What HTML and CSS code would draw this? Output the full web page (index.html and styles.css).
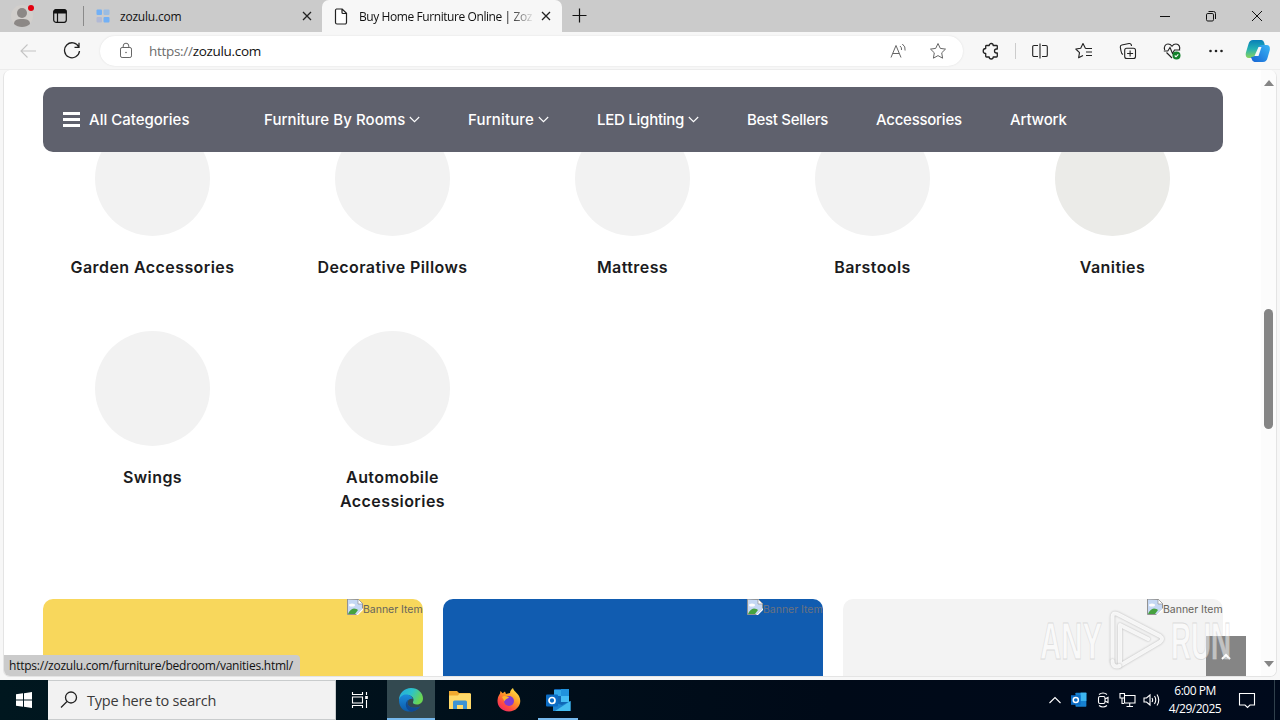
FILE: index.html
```
<!DOCTYPE html>
<html lang="en">
<head>
<meta charset="UTF-8">
<meta name="viewport" content="width=device-width, initial-scale=1">
<title>Buy Home Furniture Online | Zozulu</title>
<link rel="stylesheet" href="styles.css">
</head>
<body>

<div class="tabbar">
  <div class="profile">
    <svg width="24" height="26" viewBox="0 0 24 26"><circle cx="11" cy="14" r="11" fill="#d2cfcc"/><circle cx="11" cy="11" r="5" fill="#8c8886"/><path d="M3 22c0-4 3-5 8-5s8 1 8 5c-2 2-5 3-8 3s-6-1-8-3z" fill="#8c8886"/><circle cx="20" cy="6" r="3" fill="#e3000f"/></svg>
  </div>
  <div class="tab-actions">
    <svg width="16" height="16" viewBox="0 0 16 16"><rect x="1.700" y="1.700" width="12.600" height="12.600" rx="2.200" fill="none" stroke="#111" stroke-width="1.200"/><path d="M1.500 5.500V3.500a2 2 0 0 1 2-2h9a2 2 0 0 1 2 2v2z" fill="#111"/><path d="M5.500 5v9" stroke="#111" stroke-width="1.200"/></svg>
  </div>
  <div class="tab">
    <svg width="14" height="14" viewBox="0 0 14 14"><g fill="#72b0f5"><rect x="7.500" y=".5" width="6" height="5.500" rx="1" opacity=".55"/><rect x=".5" y=".5" width="5.500" height="5.500" rx="1"/><rect x="7.500" y="8" width="6" height="5.500" rx="1"/></g><rect x=".5" y="8" width="5.500" height="5.500" rx="1" fill="#b1b9d5"/></svg>
    <span class="tab-title">zozulu.com</span>
    <svg class="tab-close" width="10" height="10" viewBox="0 0 10 10"><path d="M1 1l8 8M9 1L1 9"/></svg>
  </div>
  <div class="tab active">
    <svg width="14" height="17" viewBox="0 0 14 17"><path d="M2.500 1h5.700L12.500 5.300v9.200a1.500 1.500 0 0 1-1.500 1.500H3A1.500 1.500 0 0 1 1.500 14.500V2.300A1.300 1.300 0 0 1 2.500 1zM8 1v3.500a1 1 0 0 0 1 1h3.500" fill="#fff" stroke="#222" stroke-width="1.200"/></svg>
    <span class="tab-title fade">Buy Home Furniture Online | Zoz</span>
    <svg class="tab-close" width="10" height="10" viewBox="0 0 10 10"><path d="M1 1l8 8M9 1L1 9"/></svg>
  </div>
  <div class="new-tab">
    <svg width="15" height="15" viewBox="0 0 15 15"><path d="M7.500 .5v14M.5 7.500h14" stroke="#111" stroke-width="1.200"/></svg>
  </div>
  <div class="window-buttons">
    <svg width="12" height="12" viewBox="0 0 12 12"><path d="M1 6.500h10"/></svg>
    <svg width="12" height="12" viewBox="0 0 12 12"><rect x="1.500" y="3.500" width="7" height="7.500" rx="1.300"/><path d="M3.500 1.500H8.500A2 2 0 0 1 10.500 3.500V9"/></svg>
    <svg width="12" height="12" viewBox="0 0 12 12"><path d="M1 1l10 10M11 1L1 11"/></svg>
  </div>
</div>

<div class="toolbar">
  <div class="tool muted"><svg width="18" height="16" viewBox="0 0 18 16"><path d="M17 8H2M8.500 1.500L2 8l6.500 6.500"/></svg></div>
  <div class="tool"><svg width="18" height="18" viewBox="0 0 18 18"><path d="M15.800 5A7.500 7.500 0 1 0 16.500 9M16 .8V5.300H11.500" stroke-width="1.300"/></svg></div>
  <div class="address">
    <svg width="14" height="17" viewBox="0 0 14 17"><rect x="1.500" y="5.500" width="11" height="10" rx="1.600"/><path d="M4.200 5.500V4a2.800 2.800 0 0 1 5.600 0v1.500"/><circle cx="7" cy="10.500" r=".8" fill="#666" stroke="none"/></svg>
    <span class="url"><i>https://</i>zozulu.com</span>
    <svg class="read" width="17" height="16" viewBox="0 0 17 16"><path d="M1 14.500L6 2.500l5 12M2.800 10.500h6.400M10 3q2 1.500 1.500 4M12.300 1q3.500 2.500 2.800 6.500"/></svg>
    <svg width="18" height="18" viewBox="0 0 18 18"><path d="M9 1.500l2.300 4.900 5.200.7-3.800 3.700.9 5.400L9 13.600l-4.600 2.600.9-5.400L1.500 7.100l5.200-.7z" stroke-linejoin="round"/></svg>
  </div>
  <div class="tool"><svg width="18" height="18" viewBox="0 0 18 18"><path d="M4.500 3.500h2.700a2 2 0 0 1 4 0h3.300q.8 0 .8.800V7H14.500a2 2 0 0 0 0 4h.8v3.200q0 .8-.8.800h-3.300a2 2 0 0 1-4 0H4.500q-.8 0-.8-.8V11.500a2.300 2.300 0 0 1 0-5V4.300q0-.8.800-.8z" stroke-linejoin="round" stroke-width="1.300"/></svg></div>
  <div class="divider"></div>
  <div class="tool"><svg width="18" height="18" viewBox="0 0 18 18"><path d="M7 3.500H3A1.300 1.300 0 0 0 1.700 4.800v8.400A1.300 1.300 0 0 0 3 14.500h4M11 3.500h4a1.300 1.300 0 0 1 1.300 1.300v8.400a1.300 1.300 0 0 1-1.300 1.300h-4M9 1.500v15"/></svg></div>
  <div class="tool"><svg width="18" height="18" viewBox="0 0 18 18"><path d="M10.500 6.500L8 1.500 5.700 6.300.8 7l3.700 3.600-.9 5.200L8 13.400M10.500 6.500h6.500M11 10h6M11 13.500h6" stroke-linejoin="round"/></svg></div>
  <div class="tool"><svg width="18" height="18" viewBox="0 0 18 18"><rect x="5.700" y="6.200" width="10.800" height="10.300" rx="2"/><path d="M11.100 8.500v6M8.100 11.500h6M4 12.500C2.500 12 2.300 11 2 9L1.300 5.200A2 2 0 0 1 2.800 3L10 1.500a2 2 0 0 1 2.300 1.300L12.500 4" /></svg></div>
  <div class="tool"><svg width="18" height="18" viewBox="0 0 18 18"><path d="M1.700 8C.5 4.500 2.500 2 5 2c2 0 3.200 1 4 2.200C9.800 3 11 2 13 2c3 0 4.500 3 3.300 6M.8 9h4L7 5.500l2.500 6L11.500 8h5.700M3.500 10.500L9 16"/><circle cx="13.500" cy="13.500" r="4" fill="#13812b" stroke="none"/><path d="M11.700 13.500l1.300 1.300 2.300-2.500" stroke="#fff"/></svg></div>
  <div class="tool"><svg width="18" height="18" viewBox="0 0 18 18"><g fill="#222" stroke="none"><circle cx="3.500" cy="9" r="1.300"/><circle cx="9" cy="9" r="1.300"/><circle cx="14.500" cy="9" r="1.300"/></g></svg></div>
  <div class="copilot">
    <svg width="26" height="24" viewBox="0 0 26 24">
      <defs>
        <linearGradient id="cpA" x1="0" y1="0" x2="0" y2="1"><stop offset="0" stop-color="#087fb8"/><stop offset=".5" stop-color="#24b1b4"/><stop offset="1" stop-color="#8bd45b"/></linearGradient>
        <linearGradient id="cpB" x1="1" y1="0" x2="0" y2="1"><stop offset="0" stop-color="#39b6f5"/><stop offset="1" stop-color="#1663d3"/></linearGradient>
      </defs>
      <path d="M8 1h8.500q2 0 2.800 3l.7 3h-3q-3 0-4 3l-2 6q-1 3-4 3H4q-4 0-3.200-5L3.500 5Q4.500 1 8 1z" fill="url(#cpA)"/>
      <path d="M18 23H9.500q-2 0-2.800-3L6 18q4 0 5-3l2-6q1-3 4-3h4.500q4 0 3.300 5l-2.300 8q-1 4-4.500 4z" fill="url(#cpB)"/>
      <path d="M13.500 8h3l-3 9h-4z" fill="#f7f7f7"/>
    </svg>
  </div>
</div>

<div class="viewport">
  <nav class="site-nav">
    <div class="all-categories">
      <span class="burger"></span>
      <span>All Categories</span>
    </div>
    <ul class="menu">
      <li class="m-rooms">Furniture By Rooms <svg width="11" height="7" viewBox="0 0 11 7"><path d="M.8 1l4.700 4.700L10.200 1"/></svg></li>
      <li class="m-furniture">Furniture <svg width="11" height="7" viewBox="0 0 11 7"><path d="M.8 1l4.700 4.700L10.200 1"/></svg></li>
      <li class="m-led">LED Lighting <svg width="11" height="7" viewBox="0 0 11 7"><path d="M.8 1l4.700 4.700L10.200 1"/></svg></li>
      <li class="m-best">Best Sellers</li>
      <li class="m-acc">Accessories</li>
      <li class="m-art">Artwork</li>
    </ul>
  </nav>

  <div class="categories">
    <div class="category"><div class="circle"></div><h3>Garden Accessories</h3></div>
    <div class="category"><div class="circle"></div><h3>Decorative Pillows</h3></div>
    <div class="category"><div class="circle"></div><h3>Mattress</h3></div>
    <div class="category"><div class="circle"></div><h3>Barstools</h3></div>
    <div class="category hover"><div class="circle"></div><h3>Vanities</h3></div>
    <div class="category"><div class="circle"></div><h3>Swings</h3></div>
    <div class="category"><div class="circle"></div><h3>Automobile<br>Accessiories</h3></div>
  </div>

  <div class="banners">
    <div class="banner yellow">
      <svg width="16" height="16" viewBox="0 0 16 16"><path d="M.5 0v15.500H10L15.500 10V4.500L11 .5z" fill="#c5d8f4" stroke="#929292"/><path d="M11 0v5h5z" fill="#fff" stroke="#929292" stroke-width=".7"/><ellipse cx="5" cy="6" rx="3" ry="1.600" fill="#fff"/><path d="M1 15q2-5 6-5.500 3 0 4 1.500L8 15z" fill="#46a23f"/><path d="M9 16l7-7v2l-5 5z" fill="#fff"/></svg><span>Banner Item</span>
    </div>
    <div class="banner blue">
      <svg width="16" height="16" viewBox="0 0 16 16"><path d="M.5 0v15.500H10L15.500 10V4.500L11 .5z" fill="#c5d8f4" stroke="#929292"/><path d="M11 0v5h5z" fill="#fff" stroke="#929292" stroke-width=".7"/><ellipse cx="5" cy="6" rx="3" ry="1.600" fill="#fff"/><path d="M1 15q2-5 6-5.500 3 0 4 1.500L8 15z" fill="#46a23f"/><path d="M9 16l7-7v2l-5 5z" fill="#fff"/></svg><span>Banner Item</span>
    </div>
    <div class="banner grey">
      <svg width="16" height="16" viewBox="0 0 16 16"><path d="M.5 0v15.500H10L15.500 10V4.500L11 .5z" fill="#c5d8f4" stroke="#929292"/><path d="M11 0v5h5z" fill="#fff" stroke="#929292" stroke-width=".7"/><ellipse cx="5" cy="6" rx="3" ry="1.600" fill="#fff"/><path d="M1 15q2-5 6-5.500 3 0 4 1.500L8 15z" fill="#46a23f"/><path d="M9 16l7-7v2l-5 5z" fill="#fff"/></svg><span>Banner Item</span>
    </div>
  </div>

  <div class="to-top"><svg width="10" height="7" viewBox="0 0 10 7"><path d="M1 6l4-4 4 4" fill="none" stroke="#fff" stroke-width="2"/></svg></div>

  <div class="scrollbar">
    <svg width="10" height="6" viewBox="0 0 10 6"><path d="M0 6L5 0l5 6z" fill="#858585"/></svg>
    <div class="thumb"></div>
    <svg width="10" height="6" viewBox="0 0 10 6"><path d="M0 0l5 6 5-6z" fill="#858585"/></svg>
  </div>

  <div class="status">https://zozulu.com/furniture/bedroom/vanities.html/</div>
</div>

<svg class="watermark" width="200" height="70" viewBox="0 0 200 70">
  <text x="3" y="54" textLength="62" lengthAdjust="spacingAndGlyphs">ANY</text>
  <text x="134" y="54" textLength="60" lengthAdjust="spacingAndGlyphs">RUN</text>
  <path class="play" d="M75.500 56V12q0-5 5-3L123 31q4 3 0 6L83 60.500V20l28 14"/>
  <path class="play" d="M75.500 56q0 7 7 5"/>
</svg>

<div class="taskbar">
  <div class="start"><svg width="16" height="16" viewBox="0 0 16 16"><path d="M0 2.300L7 1.300V7.500H0zM8 1.200L16 0v7.500H8zM0 8.500h7v6.200l-7-1zM8 8.500h8V16l-8-1.200z" fill="#fff"/></svg></div>
  <div class="search">
    <svg width="18" height="18" viewBox="0 0 18 18"><circle cx="11" cy="6.500" r="5.500"/><path d="M7 10.500L1 16.500"/></svg>
    <span>Type here to search</span>
  </div>
  <div class="app taskview"><svg width="18" height="16" viewBox="0 0 18 16"><path d="M1.500 0v2.500h10V0M1.500 5h10v6h-10zM1.500 16v-2.500h10V16M15.500 0v3M15.500 8v8" fill="none" stroke="#fff" stroke-width="1.100"/><rect x="14.200" y="4" width="2.600" height="3" fill="#fff"/></svg></div>
  <div class="app current running">
    <svg width="24" height="24" viewBox="0 0 24 24">
      <defs>
        <linearGradient id="edA" x1="0" y1="0" x2="1" y2=".4"><stop offset="0" stop-color="#24a8df"/><stop offset=".55" stop-color="#2dc3c9"/><stop offset="1" stop-color="#6ad552"/></linearGradient>
        <linearGradient id="edB" x1="0" y1="0" x2="0" y2="1"><stop offset="0" stop-color="#1b8bdc"/><stop offset="1" stop-color="#0c5aa8"/></linearGradient>
      </defs>
      <path d="M0 12C0 5 5.500 0 12 0c7 0 12 5 12 10.500 0 3.500-2.500 6-6 6-3 0-4.500-1.200-4-2.500 1-1.500 1-5-3-6.500C7 6 2 8 0 12z" fill="url(#edA)"/>
      <path d="M0 12c1-4.500 6-6.500 10-5 2 .8 3.500 2.500 3.800 4-1.500-1-4.800 0-5.300 3-.6 4.500 5 7.500 12.500 4.500C17 25.500 0 27 0 12z" fill="url(#edB)"/>
      <path d="M8.500 14c-.6 4.500 5 7.500 12.500 4.500-2.500 3.500-5.500 5-8.500 5.300C7 22 4.500 15.500 9.500 11.500 9 12.300 8.600 13 8.500 14z" fill="#104a94"/>
    </svg>
  </div>
  <div class="app"><svg width="22" height="20" viewBox="0 0 22 20"><path d="M0 1h8l2 2h11v16H0z" fill="#f0a92f"/><path d="M0 5.500h9l1.500-2H22V19H0z" fill="#ffd969"/><path d="M4 19v-7q0-1.500 1.500-1.500h11q1.500 0 1.500 1.500v7h-4v-4H8v4z" fill="#3d93d3"/></svg></div>
  <div class="app">
    <svg width="24" height="24" viewBox="0 0 24 24">
      <defs><linearGradient id="ffA" x1=".9" y1="0" x2=".2" y2="1"><stop offset="0" stop-color="#fff04d"/><stop offset=".45" stop-color="#ff9826"/><stop offset=".75" stop-color="#ff4a42"/><stop offset="1" stop-color="#ed2765"/></linearGradient></defs>
      <path d="M16 0c.5 3 4 4.500 6 8 4 8-2 15.500-10 15.500S-.5 17.500.7 11c.3-2.500 1.300-4 2.300-5.500L3.500 3l2.200 2.200L8 3.500 9 6l4-1c0-2 1.300-4 3-5z" fill="url(#ffA)"/>
      <circle cx="12" cy="13" r="5" fill="#813bd2"/>
      <path d="M5 9c3-2 5 0 7 .2-1.500 2-4 1.500-4.200 4.300C7 12 6 11 5 9z" fill="#ffb52e"/>
    </svg>
  </div>
  <div class="app running small">
    <svg width="25" height="23" viewBox="0 0 25 23"><rect x="8" y="0" width="15" height="20" rx="1" fill="#1066b5"/><path d="M8 1h7v6H8z" fill="#32a8e8"/><path d="M15 0h8v7h-8z" fill="#2192dd"/><path d="M15 7h8v6h-8z" fill="#45bcf4"/><path d="M7 13l9 3 8.500-4v10H7z" fill="#1c83d0"/><path d="M24.500 12L9 22h15.500z" fill="#46bdf0"/><rect x="0" y="5.500" width="12" height="12" rx="1" fill="#0b6cc4"/><circle cx="6" cy="11.500" r="3" fill="none" stroke="#fff" stroke-width="1.700"/></svg>
  </div>
  <div class="tray">
    <svg width="14" height="14" viewBox="0 0 14 14"><path d="M1.500 10L7 4.500l5.500 5.500"/></svg>
    <svg width="16" height="16" viewBox="0 0 25 23"><g stroke="none"><rect x="7" y="0" width="17" height="22" rx="1" fill="#1680cf"/><path d="M15 0h9v13h-9z" fill="#3db5ef"/><rect x="0" y="4" width="15" height="15" fill="#0b6cc4"/></g><circle cx="7.500" cy="11.500" r="4" stroke-width="2.300"/></svg>
    <svg width="16" height="16" viewBox="0 0 16 16"><rect x="3.500" y="4.500" width="6.500" height="7" rx="1.500"/><path d="M10 7l3-1.500v5L10 9M4 2.500q4-3 8 0M4 13.500q4 3 8 0"/></svg>
    <svg width="17" height="16" viewBox="0 0 17 16"><path d="M6 3.500h10v7.500H5.500V6M10.700 11v3.500M7.500 14.500h6.500M1 1.500h4.500V6H1zM3 6v5.500h2"/></svg>
    <svg width="17" height="16" viewBox="0 0 17 16"><path d="M1 6h2.500L7 3v10L3.500 10H1zM9 6q1.300 2 0 4M11.500 4q2.500 4 0 8M14 2.500q3.500 5.500 0 11"/></svg>
  </div>
  <div class="clock"><span>6:00 PM</span><span>4/29/2025</span></div>
  <div class="notify"><svg width="18" height="17" viewBox="0 0 18 17"><path d="M1.500 1.500h15v11.500H12L9.500 15.500 7 13H1.500z" fill="none" stroke="#fff" stroke-width="1.100"/></svg></div>
</div>

</body>
</html>
```
FILE: styles.css
```
* {
  box-sizing: border-box;
}
body {
  margin: 0;
  width: 1280px;
  height: 720px;
  overflow: hidden;
  background: #f7f7f7;
  font-family: "Open Sans", "Noto Sans", sans-serif;
  color: #111;
  position: relative;
}
svg {
  display: block;
  flex: none;
}

/* tabs */
.tabbar {
  display: flex;
  height: 32px;
  background: #cbcbcb;
  font-size: 12px;
}
.profile {
  width: 44px;
  padding: 2px 0 0 11px;
}
.tab-actions {
  width: 40px;
  margin-top: 6px;
  padding: 2px 0 0 8px;
  border-right: 1px solid #8a8a8a;
  height: 20px;
}
.tab {
  display: flex;
  align-items: center;
  width: 238px;
  padding: 0 10px 0 12px;
}
.tab-title {
  margin-left: 10px;
  flex: 1;
  white-space: nowrap;
  letter-spacing: -0.2px;
}
.tab.active {
  width: 240px;
  background: #f7f7f7;
  border-radius: 7px 7px 0 0;
  padding: 0 11px 0 12px;
}
.tab.active .tab-title {
  margin-left: 11px;
  letter-spacing: -0.42px;
}
.fade {
  -webkit-mask-image: linear-gradient(to right, #000 82%, transparent 97%);
  mask-image: linear-gradient(to right, #000 82%, transparent 97%);
}
.tab-close {
  stroke: #222;
  stroke-width: 1.3;
}
.new-tab {
  padding: 8px 0 0 10px;
}
.window-buttons {
  margin-left: auto;
  display: flex;
  gap: 34px;
  padding: 10px 17px 0 0;
  fill: none;
  stroke: #111;
}

/* address bar */
.toolbar {
  display: flex;
  align-items: center;
  height: 38px;
  padding-left: 6px;
  border-bottom: 1px solid #ececec;
}
.tool {
  width: 44px;
  flex: none;
  display: flex;
  justify-content: center;
  fill: none;
  stroke: #222;
  stroke-width: 1.1;
}
.tool.muted {
  stroke: #c4c4c4;
}
.address {
  display: flex;
  align-items: center;
  width: 863px;
  height: 30px;
  margin: 0 6px;
  padding: 0 16px 0 19px;
  background: #fff;
  border-radius: 15px;
  box-shadow: 0 0 2px #ddd;
  fill: none;
  stroke: #666;
}
.url {
  margin-left: 16px;
  font-size: 13.5px;
  letter-spacing: -0.3px;
}
.url i {
  font-style: normal;
  color: #6c6c6c;
}
.read {
  margin: 0 22px 0 auto;
}
.divider {
  width: 1px;
  height: 16px;
  margin: 0 2px;
  background: #ccc;
}
.copilot {
  padding-left: 7px;
}

/* page */
.viewport {
  position: relative;
  width: 1274px;
  height: 607px;
  margin-left: 3px;
  padding: 51px 0 0 28px;
  background: #fff;
  border: 1px solid #e4e4e4;
  border-top: 0;
  border-radius: 7px;
  overflow: hidden;
  font-family: Inter, "Open Sans", sans-serif;
}
.site-nav {
  position: absolute;
  top: 17px;
  left: 39px;
  display: flex;
  align-items: center;
  width: 1180px;
  height: 65px;
  padding-left: 20px;
  background: #5f616d;
  border-radius: 10px;
  color: #fff;
  font-size: 15px;
  font-weight: 500;
  z-index: 1;
}
.all-categories {
  display: flex;
  align-items: center;
  gap: 9px;
  width: 201px;
}
.burger {
  width: 17px;
  height: 15px;
  border-top: 3px solid #fff;
  border-bottom: 3px solid #fff;
  background: linear-gradient(#fff, #fff) center / 100% 3px no-repeat;
}
.menu {
  display: flex;
  gap: 48px;
  list-style: none;
  margin: 0;
  padding: 0;
}
.menu li {
  display: flex;
  align-items: center;
  justify-content: space-between;
  white-space: nowrap;
}
.menu svg {
  fill: none;
  stroke: #fff;
  stroke-width: 1.1;
}
.m-rooms {
  width: 156px;
  letter-spacing: 0.07px;
}
.m-furniture {
  width: 81px;
  letter-spacing: 0.15px;
}
.m-led {
  width: 102px;
  letter-spacing: -0.25px;
}
.m-best {
  width: 81px;
  letter-spacing: -0.3px;
}
.m-acc {
  width: 86px;
  letter-spacing: -0.25px;
}
.m-art {
  letter-spacing: -0.15px;
}
.categories {
  display: grid;
  grid-template-columns: repeat(5, 240px);
  row-gap: 52px;
}
.category {
  display: flex;
  flex-direction: column;
  align-items: center;
}
.circle {
  width: 115px;
  height: 115px;
  border-radius: 50%;
  background: #f2f2f2;
}
.hover .circle {
  background: #ebebe8;
}
.category h3 {
  margin: 19px 0 0;
  padding-left: 1px;
  font-size: 16px;
  font-weight: 600;
  line-height: 24px;
  letter-spacing: 0.42px;
  text-align: center;
  color: #1b1b20;
}
.banners {
  display: flex;
  gap: 20px;
  margin: 86px 0 0 11px;
}
.banner {
  display: flex;
  justify-content: flex-end;
  width: 380px;
  height: 200px;
  border-radius: 10px;
  overflow: hidden;
  font-size: 10.5px;
  line-height: 21px;
  letter-spacing: -0.02px;
  color: #66645c;
}
.banner span {
  width: 60px;
  white-space: nowrap;
}
.yellow {
  background: #f8d75c;
}
.blue {
  background: #115cb0;
  color: #6b7280;
}
.grey {
  background: #f3f3f3;
}
.to-top {
  position: absolute;
  left: 1202px;
  top: 566px;
  width: 40px;
  height: 40px;
  display: flex;
  align-items: center;
  justify-content: center;
  background: #858585;
}
.scrollbar {
  position: absolute;
  right: 0;
  top: 0;
  width: 15px;
  height: 606px;
  display: flex;
  flex-direction: column;
  align-items: center;
  padding: 10px 0 9px;
  background: #fcfcfc;
}
.thumb {
  width: 9px;
  height: 120px;
  margin: 223px 0 auto;
  border-radius: 5px;
  background: #858585;
}
.status {
  position: absolute;
  left: 0;
  bottom: 0;
  width: 296px;
  height: 21px;
  padding-left: 5px;
  background: #cbcbcb;
  border-top-right-radius: 4px;
  font: 12px/22px "Open Sans", sans-serif;
  letter-spacing: -0.23px;
  white-space: nowrap;
}
.watermark {
  position: absolute;
  left: 1037px;
  top: 605px;
  z-index: 2;
  font-family: "Liberation Sans", sans-serif;
  font-size: 51px;
  font-weight: bold;
  fill: #fff;
  fill-opacity: 0.5;
  stroke: #c8c8c8;
  stroke-width: 0.8;
  stroke-opacity: 0.6;
}
.play {
  fill: none;
  stroke: #fff;
  stroke-width: 4;
  stroke-opacity: 0.85;
  stroke-linecap: round;
  stroke-linejoin: round;
  filter: drop-shadow(0 0 1px #aaa);
}

/* taskbar */
.taskbar {
  display: flex;
  height: 40px;
  margin-top: 3px;
  background: linear-gradient(to right, #00171f, #000a18 65%, #000a1c);
  color: #fff;
}
.start {
  width: 48px;
  padding: 12px 0 0 16px;
}
.search {
  display: flex;
  align-items: center;
  gap: 9px;
  width: 288px;
  padding-left: 12px;
  background: #f2f2f2;
  border: 1px solid #c9cccd;
  border-width: 1px 1px 1px 0;
  color: #3a3a3a;
  font-size: 14.5px;
  letter-spacing: -0.23px;
  fill: none;
  stroke: #222;
  stroke-width: 1.3;
}
.app {
  position: relative;
  width: 48px;
  margin-right: 1px;
  display: flex;
  align-items: center;
  justify-content: center;
}
.taskview {
  margin-right: 3px;
}
.current {
  background: #334950;
}
.running {
  box-shadow: inset 0 -2px #76b9ed;
}
.small {
  width: 40px;
  margin: 0 0 0 4px;
}
.tray {
  display: grid;
  grid-template-columns: repeat(5, 24px);
  place-items: center;
  margin-left: auto;
  fill: none;
  stroke: #fff;
  stroke-width: 1.1;
}
.clock {
  display: flex;
  flex-direction: column;
  justify-content: center;
  align-items: center;
  width: 64px;
  font-size: 12px;
  line-height: 18px;
  letter-spacing: -0.5px;
}
.notify {
  width: 48px;
  margin-right: 5px;
  padding: 12px 0 0 11px;
  border-right: 1px solid #30404c;
}
```
